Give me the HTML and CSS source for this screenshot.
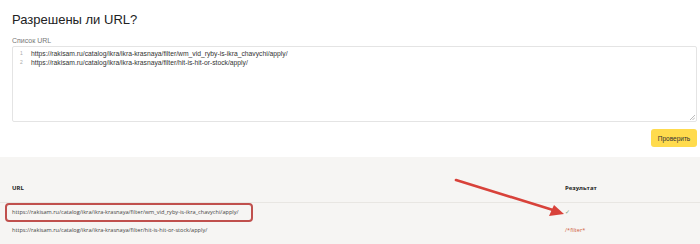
FILE: index.html
```html
<!DOCTYPE html>
<html lang="ru">
<head>
    <meta charset="UTF-8">
    <meta name="viewport" content="width=device-width, initial-scale=1.0">
    <title>Разрешены ли URL?</title>
    <link rel="stylesheet" href="styles.css">
</head>
<body>
    <!-- Форма проверки -->
    <section class="check">
        <h1>Разрешены ли URL?</h1>
        <div class="field-label">Список URL</div>
        <div class="editor">
            <div class="line"><span class="num">1</span>https://rakisam.ru/catalog/ikra/ikra-krasnaya/filter/wm_vid_ryby-is-ikra_chavychi/apply/</div>
            <div class="line"><span class="num">2</span>https://rakisam.ru/catalog/ikra/ikra-krasnaya/filter/hit-is-hit-or-stock/apply/</div>
            <svg class="resize" width="6" height="6" viewBox="0 0 6 6">
                <path d="M1 6 L6 1 M3.5 6 L6 3.5" stroke="#aaa" stroke-width="0.8"/>
            </svg>
        </div>
        <div class="actions">
            <button type="button">Проверить</button>
        </div>
    </section>

    <!-- Результаты -->
    <section class="results">
        <table>
            <thead>
                <tr>
                    <th class="col-url">URL</th>
                    <th class="col-res">Результат</th>
                </tr>
            </thead>
            <tbody>
                <tr>
                    <td><span class="mark">https://rakisam.ru/catalog/ikra/ikra-krasnaya/filter/wm_vid_ryby-is-ikra_chavychi/apply/</span></td>
                    <td class="ok">✓</td>
                </tr>
                <tr>
                    <td>https://rakisam.ru/catalog/ikra/ikra-krasnaya/filter/hit-is-hit-or-stock/apply/</td>
                    <td class="bad">/*filter*</td>
                </tr>
            </tbody>
        </table>
        <svg class="arrow" width="120" height="45" viewBox="0 0 120 45">
            <line x1="3" y1="3" x2="100" y2="33" stroke="#d8423a" stroke-width="2.6" stroke-linecap="round"/>
            <path d="M111 37 L96 39 L101 28 Z" fill="#d8423a"/>
        </svg>
    </section>
</body>
</html>
```

FILE: styles.css
```css
* {
    margin: 0;
    padding: 0;
    box-sizing: border-box;
}

body {
    background-color: #fff;
    color: #333;
    font-family: 'Liberation Sans', Arial, sans-serif;
    width: 700px;
    height: 244px;
    overflow: hidden;
}

.check {
    padding: 12px 3px 0 12px;
    height: 157px;
}

h1 {
    font-size: 13px;
    font-weight: normal;
    line-height: 16px;
    color: #222;
}

.field-label {
    font-size: 7px;
    color: #777;
    margin-top: 8px;
    line-height: 9px;
}

.editor {
    position: relative;
    height: 76px;
    margin-top: 1px;
    border: 1px solid #e4e4e4;
    border-radius: 2px;
    padding-top: 2px;
    font-size: 6.75px;
    line-height: 9px;
    color: #333;
}

.line {
    display: flex;
    white-space: nowrap;
}

.num {
    width: 18px;
    padding-left: 7px;
    color: #aaa;
    font-size: 5px;
}

.resize {
    position: absolute;
    right: 1px;
    bottom: 1px;
}

.actions {
    display: flex;
    justify-content: flex-end;
    margin-top: 7px;
}

.actions button {
    width: 46px;
    height: 18px;
    background-color: #ffdb4d;
    border: none;
    border-radius: 3px;
    font-family: 'Liberation Sans', Arial, sans-serif;
    font-size: 6.5px;
    color: #333;
}

.results {
    position: relative;
    background-color: #f6f5f3;
    height: 87px;
    padding-top: 23px;
    font-family: 'Open Sans', 'Liberation Sans', sans-serif;
}

table {
    width: 100%;
    border-collapse: collapse;
}

th {
    text-align: left;
    vertical-align: top;
    font-size: 6px;
    font-weight: bold;
    line-height: 9px;
    color: #222;
    height: 22px;
    padding-top: 4px;
    border-bottom: 1px solid #e8e6e2;
}

.col-url {
    padding-left: 12px;
    width: 565px;
}

td {
    font-size: 5.6px;
    line-height: 9px;
    color: #444;
    height: 17px;
    padding-left: 12px;
    white-space: nowrap;
}

td + td {
    padding-left: 0;
}

.mark {
    display: inline-block;
    margin-left: -7px;
    padding: 3px 12px 3px 5px;
    border: 2px solid #c0504d;
    border-radius: 4px;
}

.ok {
    color: #7a9a7a;
}

.bad {
    color: #d0603c;
}

.arrow {
    position: absolute;
    left: 453px;
    top: 20px;
}
```
